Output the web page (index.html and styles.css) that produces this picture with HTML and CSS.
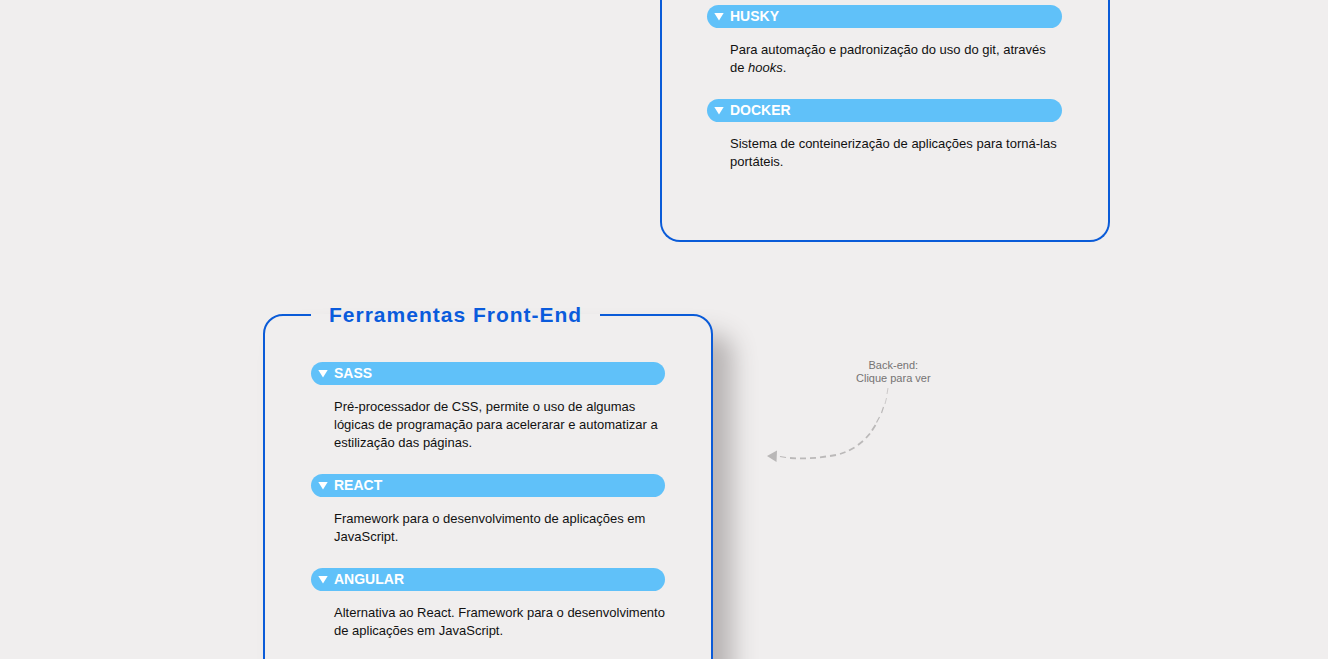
FILE: index.html
```html
<!DOCTYPE html>
<html lang="pt-BR">
<head>
<meta charset="utf-8">
<meta name="viewport" content="width=device-width, initial-scale=1">
<title>Ferramentas</title>
<link rel="stylesheet" href="styles.css">
</head>
<body>
<main class="page">
  <section class="row row-end">
    <div class="card card-continued">
      <details class="tool" open>
        <summary class="tool-name">HUSKY</summary>
        <p class="tool-text">Para automação e padronização do uso do git, através de <em>hooks</em>.</p>
      </details>
      <details class="tool" open>
        <summary class="tool-name">DOCKER</summary>
        <p class="tool-text">Sistema de conteinerização de aplicações para torná-las portáteis.</p>
      </details>
    </div>
  </section>
  <section class="row">
    <fieldset class="card card-raised">
      <legend class="card-title">Ferramentas Front-End</legend>
      <details class="tool" open>
        <summary class="tool-name">SASS</summary>
        <p class="tool-text">Pré-processador de CSS, permite o uso de algumas lógicas de programação para acelerarar e automatizar a estilização das páginas.</p>
      </details>
      <details class="tool" open>
        <summary class="tool-name">REACT</summary>
        <p class="tool-text">Framework para o desenvolvimento de aplicações em JavaScript.</p>
      </details>
      <details class="tool" open>
        <summary class="tool-name">ANGULAR</summary>
        <p class="tool-text">Alternativa ao React. Framework para o desenvolvimento de aplicações em JavaScript.</p>
      </details>
    </fieldset>
    <button class="hint" type="button">
      <span class="hint-text">Back-end:<br>Clique para ver</span>
      <svg class="hint-arrow" width="124" height="78" viewBox="0 0 124 78" fill="none" stroke="#bbb9b9" aria-hidden="true">
        <path d="M0 71L10 65.500L9.500 77Z" fill="#b9b7b7" stroke="none"/>
        <path stroke-width=".7" d="M121 3L120 9M119.500 13L118 19"/>
        <path stroke-width="1.200" d="M116.500 22L114.500 28M112.500 32L109.500 37.500"/>
        <path stroke-width="1.800" d="M108.500 40L105 45.500M103 48.500L99 53M96 56L91 60M87.500 62.500L82 65.500M78.500 67L73 69M69 70L63 71M59 71.500L53 72.300M49 72.800L43 73.200M39 73.400L33 73.400M29 73.400L23 73"/>
        <path stroke-width="1.200" d="M19 72.500L13 71.500"/>
      </svg>
    </button>
  </section>
</main>
</body>
</html>
```

FILE: styles.css
```css
* {
  box-sizing: border-box;
}

body {
  margin: 0;
  height: 100vh;
  overflow: hidden;
  background: #f0eeee;
  color: #111;
  font-family: "Liberation Sans", Arial, sans-serif;
  font-size: 13px;
  line-height: 18px;
}

.page {
  display: flex;
  flex-direction: column;
  gap: 61px;
  max-width: 892px;
  margin: 0 auto;
  padding-left: 45px;
}

.row {
  display: flex;
  align-items: flex-start;
  gap: 54px;
}

.row-end {
  justify-content: flex-end;
}

.card {
  flex: 0 1 450px;
  min-width: 0;
  margin: 0;
  padding: 35px 46px 47px;
  border: 2px solid #0a5bd8;
  border-radius: 20px;
}

.card-continued {
  padding-top: 5px;
  padding-left: 45px;
  border-top: 0;
  border-top-left-radius: 0;
  border-top-right-radius: 0;
}

.card-raised {
  box-shadow: 20px 20px 24px #b8b4b4;
}

.card-title {
  padding: 0 18px;
  color: #0a5bdc;
  font-size: 21px;
  font-weight: bold;
  letter-spacing: 1px;
  line-height: 24px;
}

.tool {
  margin-bottom: 22px;
}

.tool-name {
  display: flex;
  align-items: center;
  gap: 6px;
  padding-left: 7px;
  border-radius: 12px;
  background: #60c1f9;
  color: #fff;
  font-size: 14px;
  font-weight: bold;
  line-height: 23px;
  cursor: pointer;
}

.tool-name::before {
  content: "";
  width: 10px;
  height: 8px;
  background: #fff;
  clip-path: polygon(0 0, 100% 0, 50% 100%);
}

.tool-text {
  margin: 13px 0 0;
  padding-left: 23px;
}

.hint {
  display: flex;
  flex-direction: column;
  align-items: flex-start;
  margin-top: 56px;
  padding: 0;
  border: 0;
  background: none;
  color: #757373;
  font: 11px/13px "Liberation Sans", Arial, sans-serif;
  cursor: pointer;
}

.hint-text {
  padding-left: 89px;
}
```
